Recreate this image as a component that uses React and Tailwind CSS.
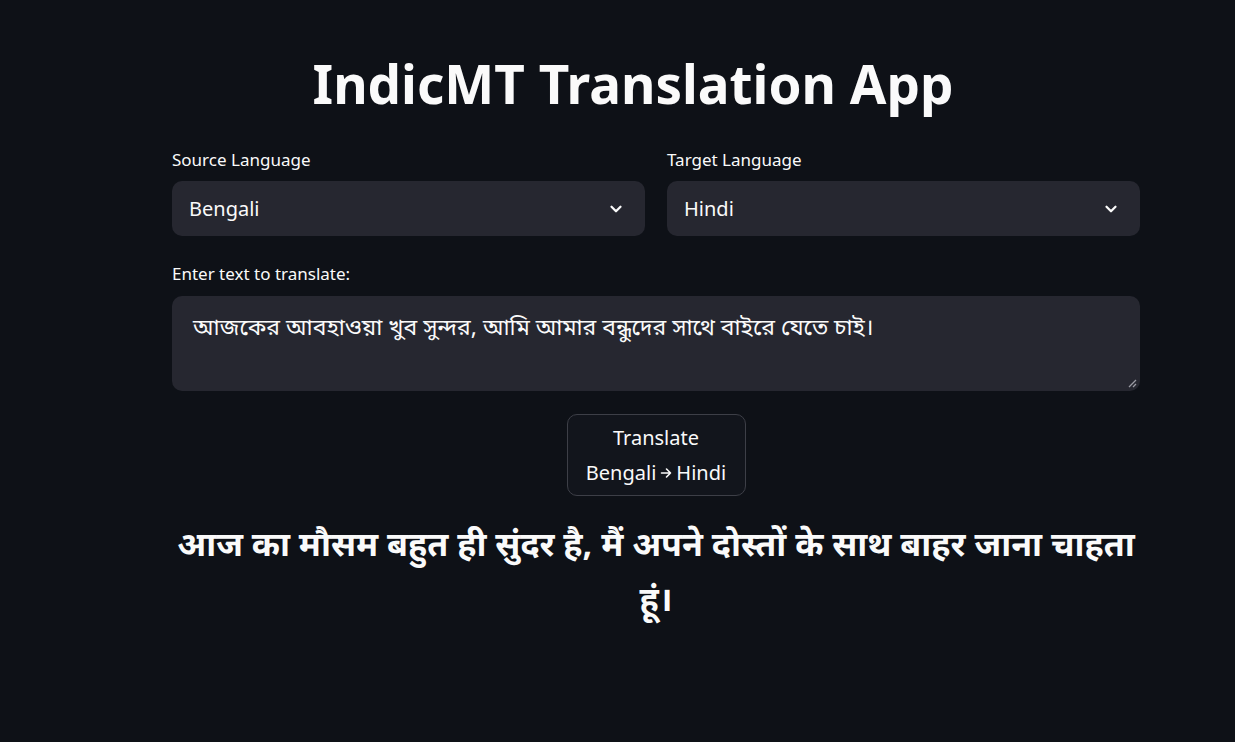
import React from 'react';

const sans = '"Noto Sans", "Noto Sans Bengali", "Noto Sans Devanagari", "Lohit Bengali", "Lohit Devanagari", sans-serif';

// Select box (static look)
const LangSelect = ({ label, value }) => (
  <div className="flex flex-col">
    <label className="text-[17px] leading-[20px] text-[#fafafa] mb-[11px]">{label}</label>
    <div className="flex items-center justify-between h-[55px] rounded-[10px] bg-[#262730] pl-[17px] pr-[20px]">
      <span className="text-[20px] text-[#fafafa]">{value}</span>
      <svg width="18" height="18" viewBox="0 0 24 24" fill="none" stroke="#fafafa" strokeWidth="3" strokeLinecap="round" strokeLinejoin="round">
        <path d="M6 9l6 6 6-6" />
      </svg>
    </div>
  </div>
);

export default function App() {
  return (
    <div className="min-h-screen bg-[#0e1117] text-[#fafafa]" style={{ fontFamily: sans }}>
      <div className="w-[968px] ml-[172px] pt-[48px] flex flex-col">
        <h1 className="text-center text-[53px] font-bold leading-[72px] mb-[30px] pr-[46px]">IndicMT Translation App</h1>

        <div className="grid grid-cols-2 gap-[22px]">
          <LangSelect label="Source Language" value="Bengali" />
          <LangSelect label="Target Language" value="Hindi" />
        </div>

        <label className="mt-[28px] text-[17px] leading-[20px] mb-[12px]">Enter text to translate:</label>
        <div className="relative h-[95px] rounded-[10px] bg-[#262730] px-[21px] pt-[15px]">
          <p className="text-[23px] leading-[30px]">আজকের আবহাওয়া খুব সুন্দর, আমি আমার বন্ধুদের সাথে বাইরে যেতে চাই।</p>
          <svg className="absolute right-[3px] bottom-[3px]" width="9" height="9" viewBox="0 0 9 9" stroke="#9a9ba3" strokeWidth="1.3">
            <path d="M8 1L1 8M8 5L5 8" />
          </svg>
        </div>

        <div className="flex justify-center mt-[23px]">
          <button className="w-[179px] h-[82px] rounded-[10px] border border-[#3d3f47] bg-[#12151c] text-[20px] leading-[35px] text-[#fafafa] flex flex-col items-center justify-center">
            <span>Translate</span>
            <span className="flex items-center gap-[4px]">
              Bengali
              <svg width="12" height="12" viewBox="0 0 12 12" fill="none" stroke="#fafafa" strokeWidth="1.6" strokeLinecap="round" strokeLinejoin="round">
                <path d="M1.5 6h9M6.5 2l4 4-4 4" />
              </svg>
              Hindi
            </span>
          </button>
        </div>

        <p className="mt-[20px] text-center text-[34px] font-bold leading-[55px] px-[2px]">
          आज का मौसम बहुत ही सुंदर है, मैं अपने दोस्तों के साथ बाहर जाना चाहता हूं।
        </p>
      </div>
    </div>
  );
}
